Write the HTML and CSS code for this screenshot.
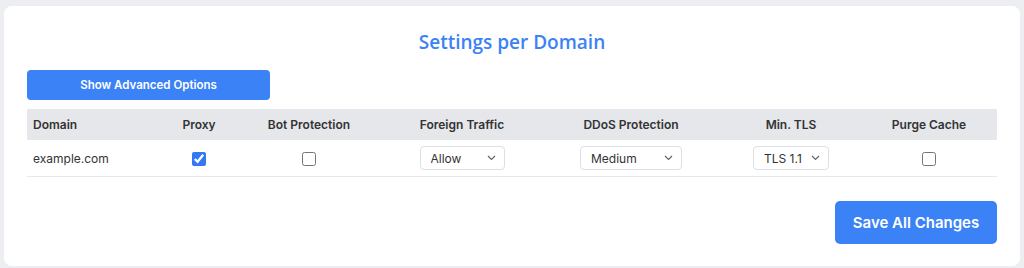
FILE: index.html
```html
<!DOCTYPE html>
<html lang="en">
<head>
    <meta charset="UTF-8">
    <meta name="viewport" content="width=device-width, initial-scale=1.0">
    <title>Settings per Domain</title>
    <link rel="stylesheet" href="styles.css">
</head>
<body>
    <div class="card">
        <h2 class="title">Settings per Domain</h2>
        <button class="advanced-btn">Show Advanced Options</button>

        <!-- Domain settings table -->
        <table class="domains">
            <colgroup>
                <col style="width: 136px">
                <col style="width: 72px">
                <col style="width: 148px">
                <col style="width: 158px">
                <col style="width: 180px">
                <col style="width: 140px">
                <col style="width: 136px">
            </colgroup>
            <thead>
                <tr>
                    <th class="left">Domain</th>
                    <th>Proxy</th>
                    <th>Bot Protection</th>
                    <th>Foreign Traffic</th>
                    <th>DDoS Protection</th>
                    <th>Min. TLS</th>
                    <th>Purge Cache</th>
                </tr>
            </thead>
            <tbody>
                <tr>
                    <td class="left">example.com</td>
                    <td><input type="checkbox" checked></td>
                    <td><input type="checkbox"></td>
                    <td>
                        <select class="traffic">
                            <option>Allow</option>
                            <option>Block</option>
                        </select>
                    </td>
                    <td>
                        <select class="ddos">
                            <option>Medium</option>
                            <option>Low</option>
                            <option>High</option>
                        </select>
                    </td>
                    <td>
                        <select class="tls">
                            <option>TLS 1.1</option>
                            <option>TLS 1.2</option>
                            <option>TLS 1.3</option>
                        </select>
                    </td>
                    <td><input type="checkbox"></td>
                </tr>
            </tbody>
        </table>

        <div class="actions">
            <button class="save-btn">Save All Changes</button>
        </div>
    </div>
</body>
</html>
```

FILE: styles.css
```css
body {
    margin: 0;
    padding: 6px 4px 0;
    background: #eceef1;
    font-family: Inter, "Liberation Sans", sans-serif;
    color: #333;
}
.card {
    background: #fff;
    border-radius: 8px;
    padding: 24px 23px 22px;
    height: 260px;
    box-sizing: border-box;
}
.title {
    margin: 0 0 16px;
    text-align: center;
    font-family: "Open Sans", Inter, sans-serif;
    font-size: 19px;
    line-height: 24px;
    font-weight: 600;
    color: #3b82f6;
}
.advanced-btn {
    display: block;
    width: 243px;
    height: 30px;
    border: none;
    border-radius: 4px;
    background: #3b82f6;
    color: #fff;
    font-family: inherit;
    font-size: 11.5px;
    font-weight: 600;
    cursor: pointer;
    margin-bottom: 9px;
}
.domains {
    width: 970px;
    border-collapse: collapse;
    table-layout: fixed;
    font-size: 12px;
}
.domains th {
    background: #e5e7eb;
    height: 31px;
    padding: 0 6px;
    font-weight: 600;
    text-align: center;
}
.domains td {
    height: 36px;
    padding: 0 6px;
    text-align: center;
    border-bottom: 1px solid #e5e7eb;
}
.domains .left {
    text-align: left;
}
.domains input[type="checkbox"] {
    width: 14px;
    height: 14px;
    margin: 0;
    accent-color: #3478f6;
    vertical-align: middle;
}
.domains select {
    appearance: none;
    height: 24px;
    border: 1px solid #dcdfe3;
    border-radius: 4px;
    background: #fff url("data:image/svg+xml;utf8,<svg xmlns='http://www.w3.org/2000/svg' width='9' height='6' viewBox='0 0 9 6'><path d='M1 1l3.5 3.5L8 1' fill='none' stroke='%23666' stroke-width='1.2'/></svg>") no-repeat right 8px center;
    font-family: inherit;
    font-size: 12px;
    color: #333;
    padding: 0 20px 0 10px;
    vertical-align: middle;
}
.traffic { width: 85px; }
.ddos { width: 102px; }
.tls { width: 76px; }
.actions {
    display: flex;
    justify-content: flex-end;
    margin-top: 24px;
}
.save-btn {
    width: 162px;
    height: 43px;
    border: none;
    border-radius: 5px;
    background: #3b82f6;
    color: #fff;
    font-family: inherit;
    font-size: 15px;
    font-weight: 600;
    cursor: pointer;
}
```
